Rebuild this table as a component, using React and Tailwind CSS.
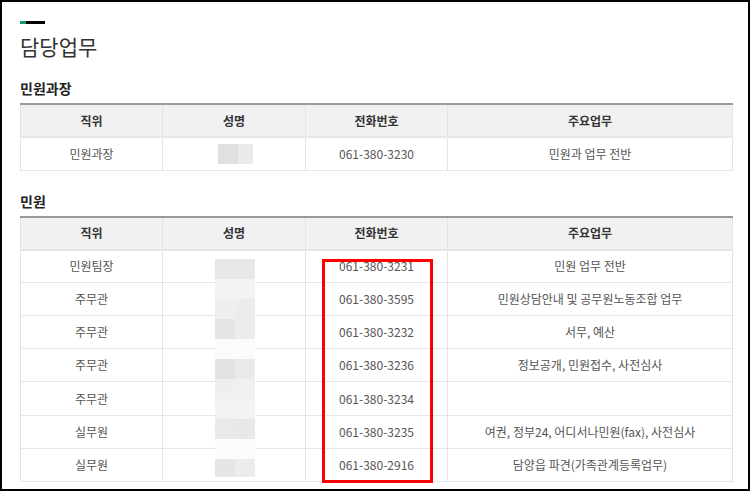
const chief = [["민원과장", "061-380-3230", "민원과 업무 전반"]];

const staff = [
  ["민원팀장", "061-380-3231", "민원 업무 전반"],
  ["주무관", "061-380-3595", "민원상담안내 및 공무원노동조합 업무"],
  ["주무관", "061-380-3232", "서무, 예산"],
  ["주무관", "061-380-3236", "정보공개, 민원접수, 사전심사"],
  ["주무관", "061-380-3234", ""],
  ["실무원", "061-380-3235", "여권, 정부24, 어디서나민원(fax), 사전심사"],
  ["실무원", "061-380-2916", "담양읍 파견(가족관계등록업무)"],
];

// blurred name mosaic: [left, right] per 20px row
const mosaic = [
  ["#e8e8e8", "#e8e8e8"],
  ["#f2f2f2", "#f3f3f3"],
  ["#efefef", "#ececec"],
  ["#e5e5e5", "#ebebeb"],
  ["#fbfbfb", "#fbfbfb"],
  ["#e3e3e3", "#e9e9e9"],
  ["#efefef", "#f0f0f0"],
  ["#f2f2f2", "#f3f3f3"],
  ["#e9e9e9", "#e8e8e8"],
  ["#fcfcfc", "#fcfcfc"],
  ["#e6e6e6", "#ececec"],
];

function StaffTable({ rows, blurFirst }) {
  return (
    <table className="w-[712px] table-fixed border-collapse border-x border-[#e3e3e3] text-[12px]">
      <colgroup>
        <col className="w-[142px]" />
        <col className="w-[143px]" />
        <col className="w-[142px]" />
        <col className="w-[285px]" />
      </colgroup>
      <thead>
        <tr className="border-t-2 border-t-[#9a9a9a] border-b-2 border-b-[#e6e6e6] bg-[#f1f1f1]">
          {["직위", "성명", "전화번호", "주요업무"].map((h) => (
            <th
              key={h}
              className="h-[33px] border-x border-[#e3e3e3] p-0 text-center font-bold text-[#333]"
            >
              {h}
            </th>
          ))}
        </tr>
      </thead>
      <tbody>
        {rows.map(([pos, tel, work], i) => (
          <tr key={i} className="border-b border-[#e6e6e6]">
            <td className="h-[33.1px] border-x border-[#e3e3e3] p-0 text-center text-[#555]">
              {pos}
            </td>
            <td className="border-x border-[#e3e3e3] p-0">
              {blurFirst && (
                <div className="ml-[55px] flex h-[20px] w-[35px]">
                  <div className="w-[20px] bg-[#e0e0e0]" />
                  <div className="w-[15px] bg-[#eaeaea]" />
                </div>
              )}
            </td>
            <td className="border-x border-[#e3e3e3] p-0 text-center text-[#555]">
              {tel}
            </td>
            <td className="border-x border-[#e3e3e3] p-0 text-center text-[#555]">
              {work}
            </td>
          </tr>
        ))}
      </tbody>
    </table>
  );
}

export default function App() {
  return (
    <div
      className="relative box-border h-[491px] w-[750px] overflow-hidden border-2 border-black bg-white pl-[18px]"
      style={{ fontFamily: '"Noto Sans CJK KR", "Noto Sans", sans-serif' }}
    >
      <div className="mt-[19px] flex h-[3px] w-[25px]">
        <div className="w-[6px] bg-[#1a9a6c]" />
        <div className="flex-1 bg-black" />
      </div>

      <h1 className="mt-[7px] text-[21px] leading-[30px] font-normal text-[#333]">
        담당업무
      </h1>

      <h2 className="mt-[17px] text-[14px] leading-[20px] font-bold text-[#222]">
        민원과장
      </h2>
      <div className="mt-[5px]">
        <StaffTable rows={chief} blurFirst />
      </div>

      <h2 className="mt-[20px] text-[14px] leading-[20px] font-bold text-[#222]">
        민원
      </h2>
      <div className="mt-[5px]">
        <StaffTable rows={staff} />
      </div>

      {/* blurred names over the second table */}
      <div className="absolute top-[257px] left-[213px] flex w-[40px] flex-col">
        {mosaic.map(([a, b], i) => (
          <div key={i} className={i === 10 ? "flex h-[18px]" : "flex h-[20px]"}>
            <div className="w-[20px]" style={{ backgroundColor: a }} />
            <div className="w-[20px]" style={{ backgroundColor: b }} />
          </div>
        ))}
      </div>

      {/* red highlight box */}
      <div className="absolute top-[257px] left-[320px] h-[224px] w-[111px] border-[3px] border-[#ff0000]" />
    </div>
  );
}
